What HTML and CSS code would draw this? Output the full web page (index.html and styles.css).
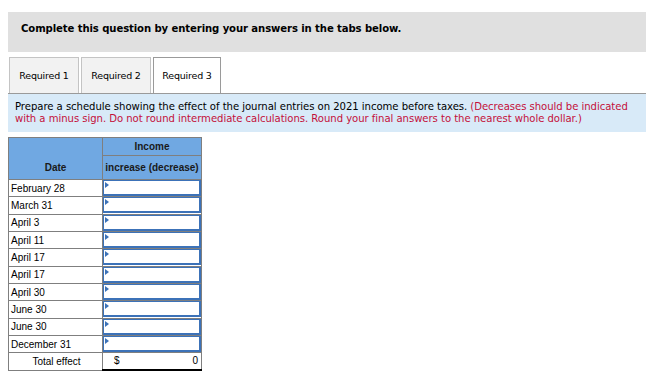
FILE: index.html
```html
<!DOCTYPE html>
<html lang="en">
<head>
    <meta charset="UTF-8">
    <title>Required 3</title>
    <link rel="stylesheet" href="styles.css">
</head>
<body>
    <div class="page">
        <div class="question-head">Complete this question by entering your answers in the tabs below.</div>

        <div class="tabs">
            <div class="tab">Required 1</div>
            <div class="tab">Required 2</div>
            <div class="tab active">Required 3</div>
        </div>

        <div class="instructions">
            Prepare a schedule showing the effect of the journal entries on 2021 income before taxes.
            <span class="note">(Decreases should be indicated with a minus sign. Do not round intermediate calculations. Round your final answers to the nearest whole dollar.)</span>
        </div>

        <table class="schedule">
            <thead>
                <tr>
                    <th class="date-col" rowspan="2">Date</th>
                    <th class="income-top">Income</th>
                </tr>
                <tr>
                    <th class="income-bottom">increase (decrease)</th>
                </tr>
            </thead>
            <tbody>
                <tr><td>February 28</td><td class="entry"><div class="field"></div></td></tr>
                <tr><td>March 31</td><td class="entry"><div class="field"></div></td></tr>
                <tr><td>April 3</td><td class="entry"><div class="field"></div></td></tr>
                <tr><td>April 11</td><td class="entry"><div class="field"></div></td></tr>
                <tr><td>April 17</td><td class="entry"><div class="field"></div></td></tr>
                <tr><td>April 17</td><td class="entry"><div class="field"></div></td></tr>
                <tr><td>April 30</td><td class="entry"><div class="field"></div></td></tr>
                <tr><td>June 30</td><td class="entry"><div class="field"></div></td></tr>
                <tr><td>June 30</td><td class="entry"><div class="field"></div></td></tr>
                <tr><td>December 31</td><td class="entry"><div class="field"></div></td></tr>
                <tr class="total-row">
                    <td class="total-label">Total effect</td>
                    <td class="total-value"><div class="amount"><span>$</span><span>0</span></div></td>
                </tr>
            </tbody>
        </table>
    </div>
</body>
</html>
```

FILE: styles.css
```css
body {
    margin: 8px;
    background-color: #fff;
    font-family: "DejaVu Sans", Verdana, sans-serif;
    color: #000;
}
.page {
    width: 638px;
    padding-top: 4px;
}
.question-head {
    background-color: #e0e0e0;
    height: 40px;
    box-sizing: border-box;
    padding: 10px 13px 0;
    line-height: 13px;
    font-size: 10.1px;
    font-weight: bold;
    letter-spacing: -0.1px;
}
.tabs {
    display: flex;
    gap: 2px;
    margin-top: 5px;
    padding-left: 1px;
    border-bottom: 1px solid #9a9a9a;
}
.tab {
    width: 68px;
    height: 35px;
    display: flex;
    align-items: center;
    justify-content: center;
    background-color: #f2f2f2;
    border: 1px solid #c4c4c4;
    border-bottom: none;
    font-size: 9.5px;
    letter-spacing: -0.2px;
}
.tab.active {
    background-color: #fff;
    border-color: #9a9a9a;
    margin-bottom: -1px;
    box-sizing: border-box;
    padding-bottom: 1px;
    height: 36px;
}
.instructions {
    background-color: #d8eaf8;
    padding: 7px 3px 7px 7px;
    font-size: 10.1px;
    line-height: 12px;
    letter-spacing: -0.05px;
}
.note {
    color: #c4103a;
}
.schedule {
    margin-top: 5px;
    border-collapse: collapse;
    font-family: "Liberation Sans", Arial, sans-serif;
    font-size: 10px;
}
.schedule th,
.schedule td {
    border: 1px solid #7f7f7f;
    padding: 0;
}
.schedule th {
    background-color: #70a8e2;
    font-weight: bold;
    color: #1a1a1a;
    width: 98px;
}
.schedule th.date-col {
    width: 93px;
    vertical-align: bottom;
    line-height: 23px;
}
.income-top {
    height: 17px;
}
.income-bottom {
    height: 23px;
}
.schedule tbody tr {
    height: 17.33px;
}
.schedule td {
    padding-left: 2px;
}
.schedule td.entry {
    position: relative;
    padding: 0;
}
.field {
    height: 13px;
    border: 1px solid #3c72b8;
    border-bottom-width: 2px;
    border-right-width: 2px;
    background-color: #fff;
}
/* little marker in the corner of each answer box */
.entry::before {
    content: "";
    position: absolute;
    left: 2px;
    top: 2px;
    border-top: 3px solid transparent;
    border-bottom: 3px solid transparent;
    border-left: 4px solid #3c72b8;
}
.total-label {
    text-align: center;
}
.schedule td.total-value {
    border-top: 1px solid #000;
    border-bottom: 3px solid #000;
    padding: 0 3px 0 11px;
}
.amount {
    display: flex;
    justify-content: space-between;
}
```
